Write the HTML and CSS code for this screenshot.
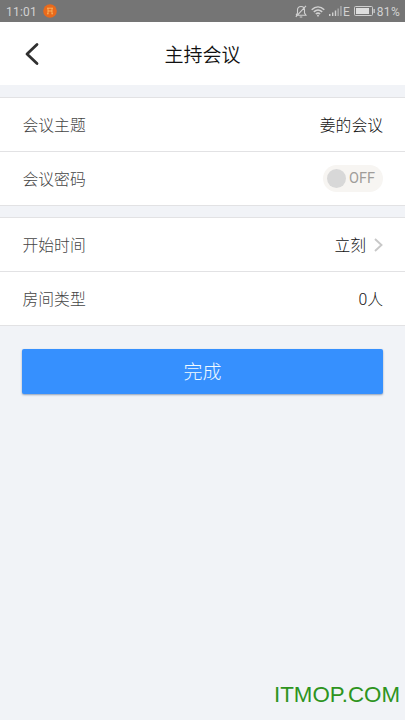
FILE: index.html
```html
<!DOCTYPE html>
<html lang="zh-CN">
<head>
<meta charset="utf-8">
<title>主持会议</title>
<link rel="stylesheet" href="styles.css">
</head>
<body>
<div class="screen">
  <div class="status">
    <span class="clock">11:01</span>
    <svg class="notice" width="14" height="14" viewBox="0 0 14 14"><circle cx="7" cy="7" r="6.8" fill="#e86a1c"/><path d="M4 4.2h6M5 4.2v5.6M9 4.2v5.6M5 7h4M4 9.800h1.500M8.500 9.800H10" stroke="#ffc06a" stroke-width=".8" fill="none"/></svg>
    <div class="indicators">
      <svg class="bell" width="12" height="13" viewBox="0 0 12 13" fill="none" stroke="#d2d2d2" stroke-width="1.1"><path d="M1 10.2h10L9.500 8V5C9.500 2.800 8 1.500 6 1.500S2.500 2.800 2.500 5v3L1 10.200M4.700 12h2.600M11 .8L.8 11.800"/></svg>
      <svg class="wifi" width="14" height="11" viewBox="0 0 14 11" fill="none" stroke="#d2d2d2" stroke-width="1.5"><path d="M.7 3.700C4.500.200 9.500.200 13.300 3.700M2.800 5.900c2.500-2.200 5.900-2.200 8.400 0M4.800 8c1.400-1.100 3-1.100 4.400 0"/><circle cx="7" cy="9.700" r=".9" fill="#d2d2d2" stroke="none"/></svg>
      <svg class="signal" width="13" height="10" viewBox="0 0 13 10"><path d="M0 8h1.500v2H0zM3 6.500h1.400V10H3zM5.800 4.500h1.400V10H5.800z" fill="#d0d0d0"/><path d="M8.500 2.500h1.300V10H8.500zM11.300 0h1.300v10h-1.300z" fill="#b0b0b0"/></svg>
      <span class="network">E</span>
      <svg class="battery" width="21" height="10" viewBox="0 0 21 10"><rect x=".5" y=".5" width="18" height="9" rx="1" fill="none" stroke="#cfcfcf"/><path d="M2 2h13v6H2z" fill="#dedede"/><path d="M19.500 3h1.300v4h-1.300z" fill="#cfcfcf"/></svg>
      <span class="percent">81%</span>
    </div>
  </div>
  <header class="header">
    <svg class="back" width="14" height="24" viewBox="0 0 14 24"><path d="M12 2.500L2 12l10 9.500" fill="none" stroke="#303030" stroke-width="2.800" stroke-linecap="round" stroke-linejoin="round"/></svg>
    <h1 class="title">主持会议</h1>
  </header>
  <section class="group">
    <div class="row"><span class="label">会议主题</span><span class="value">姜的会议</span></div>
    <div class="row"><span class="label">会议密码</span><span class="switch"><span class="knob"></span>OFF</span></div>
  </section>
  <section class="group">
    <div class="row"><span class="label">开始时间</span><span class="value">立刻</span><svg class="chevron" width="9" height="14" viewBox="0 0 9 14"><path d="M1 1l6.500 6L1 13" fill="none" stroke="#c8c8c8" stroke-width="1.900"/></svg></div>
    <div class="row"><span class="label">房间类型</span><span class="value">0人</span></div>
  </section>
  <button class="submit">完成</button>
  <footer class="watermark">ITMOP.COM</footer>
</div>
</body>
</html>
```
FILE: styles.css
```css
* { box-sizing: border-box; }
body {
  margin: 0;
  background: #f1f3f7;
  font-family: "Roboto", "Noto Sans CJK SC", sans-serif;
}
.screen {
  height: 720px;
  display: flex;
  flex-direction: column;
  overflow: hidden;
}
.status {
  flex: none;
  height: 22px;
  padding: 0 5px 0 6px;
  display: flex;
  align-items: center;
  background: #757575;
  color: #d2d2d2;
  font-size: 12px;
  line-height: 22px;
}
.clock { width: 37px; letter-spacing: 0.2px; padding-top: 2px; }
.indicators { margin-left: auto; display: flex; align-items: center; }
.wifi { margin-left: 4px; }
.signal { margin-left: 4px; }
.network { margin-left: 1px; padding-top: 1px; }
.battery { margin-left: 4px; }
.percent { margin-left: 2px; padding-top: 1px; letter-spacing: 0.3px; }
.header {
  flex: none;
  height: 63px;
  display: grid;
  grid-template-columns: 60px 1fr 60px;
  align-items: center;
  background: #fff;
}
.back { margin-left: 25px; }
.title {
  margin: 0;
  padding-top: 4px;
  text-align: center;
  font-size: 19px;
  font-weight: 350;
  line-height: 28px;
  color: #111;
}
.group {
  flex: none;
  margin-top: 12px;
  border-top: 1px solid #e2e2e4;
  background: #fff;
}
.group + .group { margin-top: 11px; }
.row {
  height: 54px;
  padding: 0 22px;
  display: flex;
  align-items: center;
  border-bottom: 1px solid #e2e2e4;
  font-size: 15.8px;
  line-height: 24px;
}
.label { margin-right: auto; padding: 3px 0 0 0.5px; color: #444; font-weight: 300; }
.value { padding-top: 3px; color: #111; font-weight: 300; }
.chevron { margin-left: 8px; }
.switch {
  width: 60px;
  height: 27px;
  padding-left: 4px;
  display: flex;
  align-items: center;
  gap: 3px;
  border-radius: 14px;
  background: #f7f5f2;
  color: #a09d9a;
  font-size: 14.5px;
}
.knob { width: 19px; height: 19px; border-radius: 50%; background: #d8d8d8; }
.submit {
  flex: none;
  height: 45px;
  margin: 23px 22px 0;
  padding: 3px 0 0;
  border: 0;
  border-radius: 2px;
  background: #3690fe;
  box-shadow: 0 1px 2px rgba(50, 80, 120, 0.5);
  color: #f0faff;
  font: 300 19px/42px "Roboto", "Noto Sans CJK SC", sans-serif;
}
.watermark {
  margin-top: auto;
  padding: 0 5px 13px 0;
  text-align: right;
  font: 22.3px/24px "Liberation Sans", sans-serif;
  color: #2e941e;
}
```
